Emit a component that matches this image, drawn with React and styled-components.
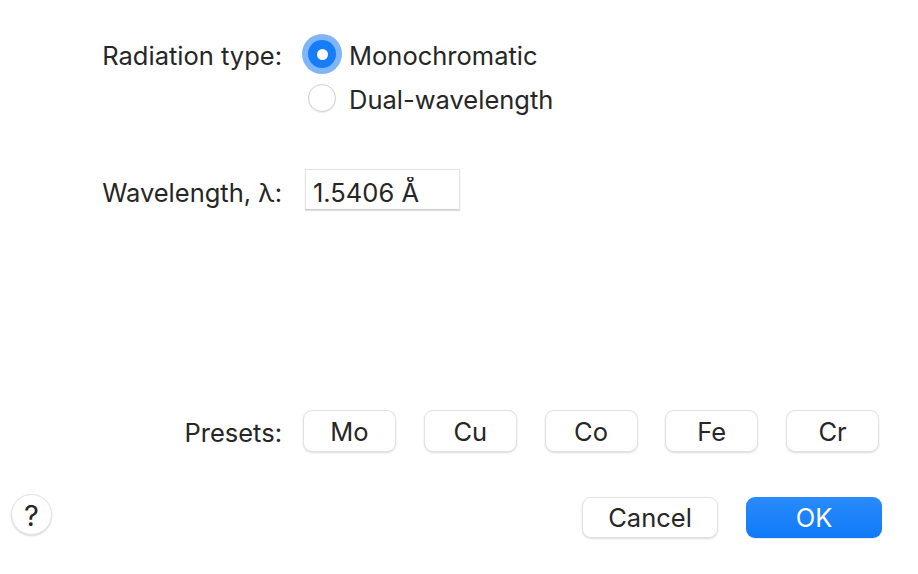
import React, { useState } from "react";
import styled, { createGlobalStyle } from "styled-components";

const Global = createGlobalStyle`
  html, body { margin: 0; padding: 0; background: #ffffff; }
  body { font-family: Inter, "Noto Sans", "Liberation Sans", sans-serif; color: #262626; }
  * { box-sizing: border-box; }
`;

const Dialog = styled.div`
  width: 918px;
  height: 574px;
  display: flex;
  flex-direction: column;
  padding: 32px 36px 36px 11px;
  background: #ffffff;
`;

const FormGrid = styled.div`
  display: grid;
  grid-template-columns: 271px 1fr;
  column-gap: 21px;
  align-items: ${(p) => p.$align || "center"};
  margin-top: ${(p) => p.$top || 0}px;
`;

const Label = styled.div`
  font-size: 25.5px;
  text-align: right;
  line-height: 1;
  display: flex;
  align-items: center;
  justify-content: flex-end;
  min-height: ${(p) => p.$h || 0}px;
  padding-top: ${(p) => p.$padTop || 0}px;
`;

const RadioGroup = styled.div`
  display: flex;
  flex-direction: column;
`;

const RadioOption = styled.label`
  display: flex;
  align-items: center;
  gap: 13px;
  height: 44px;
  padding-left: 5px;
  font-size: 25.5px;
  line-height: 1;
  cursor: default;
`;

const OptionText = styled.span`
  padding-top: 3px;
`;

const RadioCircle = styled.span`
  width: 28px;
  height: 28px;
  border-radius: 50%;
  flex: none;
  display: flex;
  align-items: center;
  justify-content: center;
  background: ${(p) => (p.$checked ? "#147df7" : "#ffffff")};
  border: ${(p) => (p.$checked ? "none" : "1px solid #d2d2d2")};
  box-shadow: ${(p) =>
    p.$checked
      ? "0 0 0 6px rgba(24, 120, 245, 0.55)"
      : "0 1px 1px rgba(0,0,0,0.08), inset 0 1px 1px rgba(0,0,0,0.03)"};
  &::after {
    content: "";
    display: ${(p) => (p.$checked ? "block" : "none")};
    width: 11px;
    height: 11px;
    border-radius: 50%;
    background: #ffffff;
  }
`;

const Field = styled.input`
  width: 155px;
  height: 41px;
  margin-left: 2px;
  border: 1px solid #e3e3e3;
  border-bottom-color: #cfcfcf;
  box-shadow: 0 1px 1px rgba(0,0,0,0.12);
  font-family: inherit;
  font-size: 25.5px;
  color: #262626;
  padding: 5px 0 0 7px;
  outline: none;
  background: #ffffff;
`;

const Spacer = styled.div`
  flex: 1;
`;

const PresetRow = styled.div`
  display: flex;
  gap: 27.75px;
`;

const Button = styled.button`
  width: ${(p) => p.$w || 93}px;
  height: ${(p) => p.$h || 42}px;
  border-radius: 9px;
  font-family: inherit;
  font-size: 25.5px;
  line-height: 1;
  color: ${(p) => (p.$primary ? "#ffffff" : "#262626")};
  background: ${(p) =>
    p.$primary ? "linear-gradient(#2a8bfb, #0f7af7)" : "#ffffff"};
  border: ${(p) => (p.$primary ? "none" : "1px solid #e2e2e2")};
  box-shadow: ${(p) =>
    p.$primary
      ? "0 1px 1px rgba(0,0,0,0.1)"
      : "0 1px 2px rgba(0,0,0,0.14)"};
  padding: ${(p) => p.$padTop ?? 2}px 0 0;
  display: flex;
  align-items: center;
  justify-content: center;
`;

const Footer = styled.div`
  display: flex;
  align-items: center;
  margin-top: 45px;
`;

const HelpButton = styled.button`
  width: 41px;
  height: 41px;
  margin-top: -6px;
  border-radius: 50%;
  background: #ffffff;
  border: 1px solid #e2e2e2;
  box-shadow: 0 1px 2px rgba(0,0,0,0.16);
  font-family: inherit;
  font-size: 29px;
  line-height: 1;
  color: #262626;
  padding: 2px 0 0;
  display: flex;
  align-items: center;
  justify-content: center;
`;

const FooterButtons = styled.div`
  margin-left: auto;
  display: flex;
  gap: 28px;
`;

export default function App() {
  const [mode, setMode] = useState("mono");
  const presets = ["Mo", "Cu", "Co", "Fe", "Cr"];
  return (
    <>
      <Global />
      <Dialog>
        <FormGrid $align="start">
          <Label $h={44} $padTop={3}>Radiation type:</Label>
          <RadioGroup>
            <RadioOption onClick={() => setMode("mono")}>
              <RadioCircle $checked={mode === "mono"} />
              <OptionText>Monochromatic</OptionText>
            </RadioOption>
            <RadioOption onClick={() => setMode("dual")}>
              <RadioCircle $checked={mode === "dual"} />
              <OptionText>Dual-wavelength</OptionText>
            </RadioOption>
          </RadioGroup>
        </FormGrid>
        <FormGrid $top={49}>
          <Label $padTop={6}>Wavelength, λ:</Label>
          <Field defaultValue="1.5406 Å" />
        </FormGrid>
        <Spacer />
        <FormGrid>
          <Label $padTop={3}>Presets:</Label>
          <PresetRow>
            {presets.map((p) => (
              <Button key={p}>{p}</Button>
            ))}
          </PresetRow>
        </FormGrid>
        <Footer>
          <HelpButton>?</HelpButton>
          <FooterButtons>
            <Button $w={136} $h={41} $padTop={0}>Cancel</Button>
            <Button $w={136} $h={41} $padTop={0} $primary>OK</Button>
          </FooterButtons>
        </Footer>
      </Dialog>
    </>
  );
}
